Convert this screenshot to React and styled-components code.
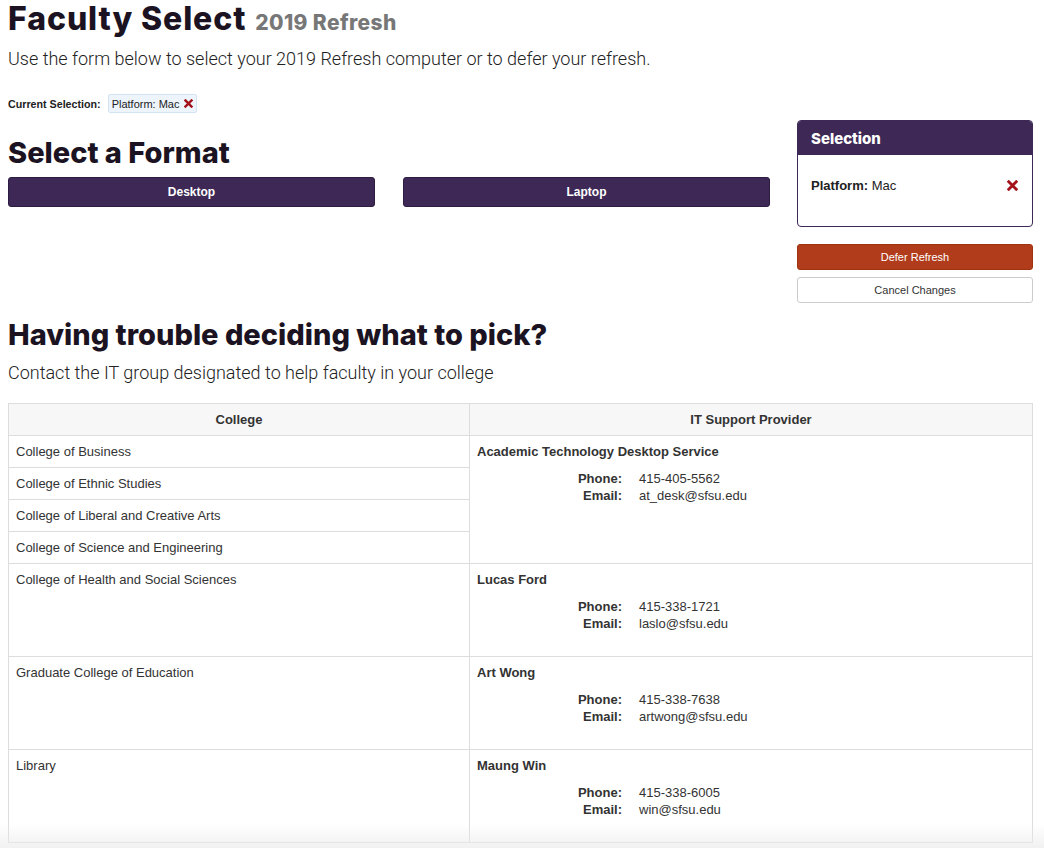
import React from 'react'
import styled, { createGlobalStyle } from 'styled-components'

const GlobalStyle = createGlobalStyle`
  html, body {
    margin: 0;
    padding: 0;
    background: #fff;
  }
  body {
    font-family: "Liberation Sans", Arial, sans-serif;
    color: #333;
  }
`

const PURPLE = '#3d2856'
const HEAD = '#1c1322'

const colleges = [
  {
    provider: 'Academic Technology Desktop Service',
    phone: '415-405-5562',
    email: 'at_desk@sfsu.edu',
    names: [
      'College of Business',
      'College of Ethnic Studies',
      'College of Liberal and Creative Arts',
      'College of Science and Engineering',
    ],
  },
  {
    provider: 'Lucas Ford',
    phone: '415-338-1721',
    email: 'laslo@sfsu.edu',
    names: ['College of Health and Social Sciences'],
  },
  {
    provider: 'Art Wong',
    phone: '415-338-7638',
    email: 'artwong@sfsu.edu',
    names: ['Graduate College of Education'],
  },
  {
    provider: 'Maung Win',
    phone: '415-338-6005',
    email: 'win@sfsu.edu',
    names: ['Library'],
  },
]

const Cross = ({ size = 10 }) => (
  <svg width={size} height={size} viewBox="0 0 10 10">
    <path d="M1.6 1.6 L8.4 8.4 M8.4 1.6 L1.6 8.4" stroke="#a3111b" strokeWidth="2.6" strokeLinecap="square" />
  </svg>
)

const App = () => {
  return (
    <Page>
      <GlobalStyle />
      <Title>
        Faculty Select <small>2019 Refresh</small>
      </Title>
      <Lead>Use the form below to select your 2019 Refresh computer or to defer your refresh.</Lead>

      <Current>
        <strong>Current Selection:</strong>
        <Pill>
          Platform: Mac <Cross size={9} />
        </Pill>
      </Current>

      <Split>
        <Main>
          <Heading>Select a Format</Heading>
          <Formats>
            <FormatButton>Desktop</FormatButton>
            <FormatButton>Laptop</FormatButton>
          </Formats>
        </Main>

        <Aside>
          <Panel>
            <PanelHead>Selection</PanelHead>
            <PanelBody>
              <span>
                <b>Platform:</b> Mac
              </span>
              <Cross size={11} />
            </PanelBody>
          </Panel>
          <ActionButton $variant="defer">Defer Refresh</ActionButton>
          <ActionButton>Cancel Changes</ActionButton>
        </Aside>
      </Split>

      <Heading $spaced>Having trouble deciding what to pick?</Heading>
      <Lead $tight>Contact the IT group designated to help faculty in your college</Lead>

      <Table>
        <colgroup>
          <col style={{ width: 461 }} />
          <col />
        </colgroup>
        <thead>
          <tr>
            <Th>College</Th>
            <Th>IT Support Provider</Th>
          </tr>
        </thead>
        <tbody>
          {colleges.map((group) =>
            group.names.map((name, i) => (
              <tr key={name}>
                <Td>{name}</Td>
                {i === 0 && (
                  <Td rowSpan={group.names.length}>
                    <Provider>{group.provider}</Provider>
                    <Contact>
                      <dt>Phone:</dt>
                      <dd>{group.phone}</dd>
                      <dt>Email:</dt>
                      <dd>{group.email}</dd>
                    </Contact>
                  </Td>
                )}
              </tr>
            ))
          )}
        </tbody>
      </Table>
      <Fade />
    </Page>
  )
}

const Page = styled.div`
  padding: 0 11px 0 8px;
  min-height: 848px;
  box-sizing: border-box;
`

const Title = styled.h1`
  margin: 0;
  font-family: Inter, "DejaVu Sans", sans-serif;
  font-weight: 800;
  font-size: 32px;
  line-height: 37px;
  color: ${HEAD};
  letter-spacing: 0.9px;

  small {
    font-size: 21px;
    font-weight: 800;
    letter-spacing: 0.4px;
    color: #777;
    margin-left: 1px;
  }
`

const Lead = styled.p`
  margin: ${(p) => (p.$tight ? '8px 0 17px' : '5px 0 22px')};
  font-family: Roboto, "Liberation Sans", sans-serif;
  font-weight: 300;
  font-size: 18px;
  line-height: 26px;
  color: #222;
`

const Current = styled.div`
  display: flex;
  align-items: center;
  gap: 7px;
  height: 19px;
  font-size: 11px;
  color: #222;

  strong {
    font-size: 10.7px;
  }
`

const Pill = styled.span`
  display: inline-flex;
  align-items: center;
  gap: 4px;
  height: 17px;
  padding: 0 3px;
  background: #edf4fc;
  border: 1px solid #d3e3f4;
  border-radius: 2px;
  font-size: 11px;
  color: #222;
`

const Split = styled.div`
  display: flex;
  gap: 27px;
  margin-top: 7px;
`

const Main = styled.div`
  flex: 1;
`

const Heading = styled.h2`
  margin: ${(p) => (p.$spaced ? '14px 0 0' : '15px 0 7px')};
  font-family: Inter, "DejaVu Sans", sans-serif;
  font-weight: 800;
  font-size: 29px;
  line-height: 35px;
  color: ${HEAD};
`

const Formats = styled.div`
  display: grid;
  grid-template-columns: 1fr 1fr;
  gap: 28px;
`

const FormatButton = styled.button`
  height: 30px;
  border: 1px solid #2e1d42;
  border-radius: 3px;
  background: ${PURPLE};
  color: #fff;
  font-family: "Liberation Sans", Arial, sans-serif;
  font-weight: 700;
  font-size: 12px;
  cursor: pointer;
`

const Aside = styled.div`
  width: 236px;
  display: flex;
  flex-direction: column;
  gap: 7px;
`

const Panel = styled.div`
  border: 1px solid ${PURPLE};
  border-radius: 4px;
  overflow: hidden;
  margin-bottom: 10px;
`

const PanelHead = styled.div`
  height: 34px;
  display: flex;
  align-items: center;
  padding: 0 13px;
  background: ${PURPLE};
  color: #fff;
  font-family: Inter, "DejaVu Sans", sans-serif;
  font-weight: 800;
  font-size: 15px;
`

const PanelBody = styled.div`
  height: 71px;
  display: flex;
  justify-content: space-between;
  padding: 22px 14px 0 13px;
  box-sizing: border-box;
  font-size: 13px;
  color: #222;
  line-height: 17px;

  svg {
    margin-top: 3px;
  }
`

const ActionButton = styled.button`
  height: 26px;
  border-radius: 3px;
  border: 1px solid ${(p) => (p.$variant === 'defer' ? '#a0330f' : '#ccc')};
  background: ${(p) => (p.$variant === 'defer' ? '#b13c1b' : '#fff')};
  color: ${(p) => (p.$variant === 'defer' ? '#fff' : '#333')};
  font-family: "Liberation Sans", Arial, sans-serif;
  font-size: 11px;
  cursor: pointer;
`

const Table = styled.table`
  width: 100%;
  border-collapse: collapse;
  table-layout: fixed;
  border: 1px solid #ddd;
  font-size: 13px;
  line-height: 17px;
  color: #333;
`

const Th = styled.th`
  padding: 7px 8px;
  background: #f7f7f7;
  border: 1px solid #ddd;
  font-weight: 700;
  text-align: center;
`

const Td = styled.td`
  padding: 7px 8px 7px 7px;
  border: 1px solid #ddd;
  vertical-align: top;
`

const Provider = styled.div`
  font-weight: 700;
`

const Contact = styled.dl`
  display: grid;
  grid-template-columns: 145px auto;
  column-gap: 17px;
  margin: 10px 0 17px;

  dt {
    font-weight: 700;
    text-align: right;
  }
  dd {
    margin: 0;
  }
`

const Fade = styled.div`
  position: fixed;
  left: 0;
  right: 0;
  bottom: 0;
  height: 24px;
  background: linear-gradient(rgba(235, 235, 235, 0), rgba(235, 235, 235, 0.7));
  pointer-events: none;
`

export default App
